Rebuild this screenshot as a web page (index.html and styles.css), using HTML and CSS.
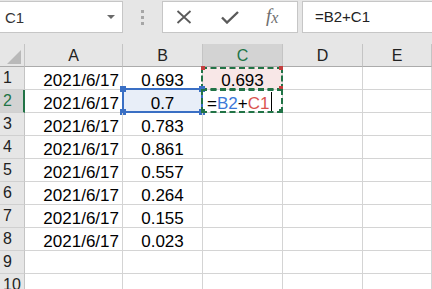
FILE: index.html
```html
<!DOCTYPE html>
<html lang="en">
<head>
  <meta charset="UTF-8" />
  <title>Sheet1</title>
  <link rel="stylesheet" href="styles.css">
</head>
<body>

  <div class="formula-bar">
    <div class="name-box">
      <span>C1</span>
      <span class="caret"></span>
    </div>
    <div class="grip"><i></i><i></i><i></i></div>
    <div class="func-box">
      <svg class="icon-x" width="16" height="14" viewBox="0 0 16 14">
        <path d="M1.5 1 L14.5 13 M14.5 1 L1.5 13" stroke="#5a5a5a" stroke-width="1.8" fill="none" />
      </svg>
      <svg class="icon-ok" width="18" height="13" viewBox="0 0 18 13">
        <path d="M1 6.5 L6 11.5 L17 1" stroke="#5a5a5a" stroke-width="2.4" fill="none" />
      </svg>
      <span class="fx">f<sub>x</sub></span>
    </div>
    <div class="formula-input">=B2+C1</div>
  </div>

  <div class="sheet">
    <div class="corner"><span class="tri"></span></div>
    <div class="col-head">A</div>
    <div class="col-head">B</div>
    <div class="col-head active">C</div>
    <div class="col-head">D</div>
    <div class="col-head">E</div>

    <div class="row-head">1</div>
    <div class="cell num">2021/6/17</div>
    <div class="cell mid">0.693</div>
    <div class="cell mid ref-red">0.693
      <span class="ants"></span>
      <i class="dot r tl"></i><i class="dot r tr"></i><i class="dot r bl"></i><i class="dot r br"></i>
    </div>
    <div class="cell"></div>
    <div class="cell"></div>

    <div class="row-head active">2</div>
    <div class="cell num">2021/6/17</div>
    <div class="cell mid ref-blue">0.7
      <span class="frame"></span>
      <i class="dot b tl"></i><i class="dot b tr"></i><i class="dot b bl"></i><i class="dot b br"></i>
    </div>
    <div class="cell editing">=<span class="t-blue">B2</span>+<span class="t-red">C1</span><span class="cursor"></span>
      <span class="ants below"></span>
      <i class="dot g bl"></i><i class="dot g br"></i>
    </div>
    <div class="cell"></div>
    <div class="cell"></div>

    <div class="row-head">3</div>
    <div class="cell num">2021/6/17</div>
    <div class="cell mid">0.783</div>
    <div class="cell"></div><div class="cell"></div><div class="cell"></div>

    <div class="row-head">4</div>
    <div class="cell num">2021/6/17</div>
    <div class="cell mid">0.861</div>
    <div class="cell"></div><div class="cell"></div><div class="cell"></div>

    <div class="row-head">5</div>
    <div class="cell num">2021/6/17</div>
    <div class="cell mid">0.557</div>
    <div class="cell"></div><div class="cell"></div><div class="cell"></div>

    <div class="row-head">6</div>
    <div class="cell num">2021/6/17</div>
    <div class="cell mid">0.264</div>
    <div class="cell"></div><div class="cell"></div><div class="cell"></div>

    <div class="row-head">7</div>
    <div class="cell num">2021/6/17</div>
    <div class="cell mid">0.155</div>
    <div class="cell"></div><div class="cell"></div><div class="cell"></div>

    <div class="row-head">8</div>
    <div class="cell num">2021/6/17</div>
    <div class="cell mid">0.023</div>
    <div class="cell"></div><div class="cell"></div><div class="cell"></div>

    <div class="row-head">9</div>
    <div class="cell"></div><div class="cell"></div><div class="cell"></div><div class="cell"></div><div class="cell"></div>

    <div class="row-head">10</div>
    <div class="cell"></div><div class="cell"></div><div class="cell"></div><div class="cell"></div><div class="cell"></div>
  </div>

</body>
</html>
```

FILE: styles.css
```css
html, body {
  margin: 0;
  height: 100%;
  overflow: hidden;
}

body {
  font-family: 'Liberation Sans', Arial, sans-serif;
  background: #fff;
  color: #000;
}

/* formula bar */

.formula-bar {
  height: 44px;
  box-sizing: border-box;
  padding-top: 1px;
  background: #e6e6e6;
  display: flex;
  align-items: flex-start;
}

.name-box {
  margin-left: -2px;
  width: 125px;
  height: 32px;
  box-sizing: border-box;
  border: 1px solid #c6c6c6;
  background: #fff;
  display: flex;
  align-items: center;
  justify-content: space-between;
  padding: 0 7px 0 6px;
  font-size: 15px;
  color: #333;
}

.caret {
  width: 0;
  height: 0;
  border-left: 4px solid transparent;
  border-right: 4px solid transparent;
  border-top: 4px solid #6a6a6a;
}

.grip {
  width: 39px;
  height: 32px;
  display: flex;
  flex-direction: column;
  align-items: center;
  gap: 3px;
  padding-top: 9px;
  box-sizing: border-box;
}

.grip i {
  display: block;
  width: 3px;
  height: 3px;
  background: #a6a6a6;
}

.func-box {
  width: 136px;
  height: 32px;
  box-sizing: border-box;
  border: 1px solid #c6c6c6;
  background: #fff;
  display: flex;
  align-items: center;
  padding-left: 13px;
}

.icon-ok {
  margin-left: 29px;
}

.fx {
  margin-left: 27px;
  font-family: 'Liberation Serif', serif;
  font-style: italic;
  font-size: 19px;
  color: #6e6e6e;
  margin-top: -2px;
}

.fx sub {
  font-size: 16px;
  vertical-align: -1px;
}

.formula-input {
  flex: 1;
  margin-left: 4px;
  margin-right: -2px;
  height: 32px;
  box-sizing: border-box;
  border: 1px solid #c6c6c6;
  background: #fff;
  padding-left: 12px;
  line-height: 30px;
  font-size: 15px;
  color: #222;
}

/* grid */

.sheet {
  display: grid;
  grid-template-columns: 25px 98px 80px 80px 80px 1fr;
  grid-template-rows: 23px repeat(10, 23px);
}

.sheet > div {
  box-sizing: border-box;
  position: relative;
}

.corner {
  background: #e6e6e6;
  border-right: 1px solid #c4c4c4;
  border-bottom: 1px solid #ababab;
}

.tri {
  position: absolute;
  left: 7px;
  top: 6px;
  width: 14px;
  height: 14px;
  background: #b9b9b9;
  clip-path: polygon(100% 0, 100% 100%, 0 100%);
}

.col-head {
  background: #e6e6e6;
  border-right: 1px solid #c4c4c4;
  border-bottom: 1px solid #ababab;
  font-size: 16px;
  line-height: 22px;
  padding-top: 1px;
  text-align: center;
  color: #222;
}

.col-head.active {
  background: #d3d3d3;
  color: #217346;
}

.row-head {
  background: #e6e6e6;
  border-right: 1px solid #c4c4c4;
  border-bottom: 1px solid #d0d0d0;
  font-size: 16px;
  line-height: 22px;
  padding-left: 3px;
  color: #222;
  white-space: nowrap;
  overflow: hidden;
}

.row-head.active {
  background: #d3d3d3;
  color: #217346;
  border-right: 2px solid #217346;
}

.cell {
  border-right: 1px solid #d4d4d4;
  border-bottom: 1px solid #d4d4d4;
  font-size: 17px;
  line-height: 17px;
  display: flex;
  align-items: flex-end;
  white-space: nowrap;
}

.cell.num {
  justify-content: flex-end;
  padding-right: 3px;
}

.cell.mid {
  justify-content: center;
}

.ref-red {
  background: #f8e7e7;
}

.ref-blue {
  background: #e8eef8;
}

.editing {
  padding-left: 4px;
}

.t-blue {
  color: #3c78d8;
}

.t-red {
  color: #d9534f;
}

.cursor {
  display: inline-block;
  width: 1px;
  height: 19px;
  background: #000;
  margin-left: 2px;
  align-self: center;
}

/* reference frames drawn over the cells */

.frame {
  position: absolute;
  top: -2px;
  left: -1px;
  right: -1px;
  bottom: -1px;
  border: 2px solid #3a6fc4;
}

.ants {
  position: absolute;
  top: 0;
  left: -2px;
  right: -1px;
  bottom: -1px;
  border: 2px dashed #217346;
}

.ants.below {
  top: -1px;
}

.dot {
  position: absolute;
  width: 4px;
  height: 4px;
}

.dot.r { background: #c43e3e; }
.dot.g { background: #217346; }
.dot.b { background: #3a6fc4; width: 6px; height: 6px; }

.dot.tl { top: -1px; left: -2px; }
.dot.tr { top: -1px; right: -1px; }
.dot.bl { bottom: -1px; left: -2px; }
.dot.br { bottom: -1px; right: -1px; }

.dot.b.tl { top: -4px; left: -3px; }
.dot.b.tr { top: -4px; right: -3px; }
.dot.b.bl { bottom: -3px; left: -3px; }
.dot.b.br { bottom: -3px; right: -3px; }
```
